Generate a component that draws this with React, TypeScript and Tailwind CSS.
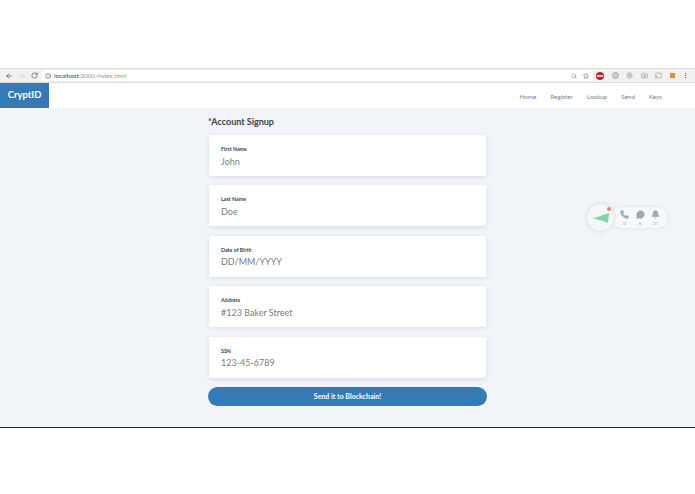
import { ArrowLeft, ArrowRight, RotateCw, Info, Search, Star, Phone, MessageCircle, Bell, Camera, Cast, MoreVertical, Settings } from "lucide-react"

const fields = [
  { label: "First Name", value: "John" },
  { label: "Last Name", value: "Doe" },
  { label: "Date of Birth", value: "DD/MM/YYYY" },
  { label: "Address", value: "#123 Baker Street" },
  { label: "SSN", value: "123-45-6789" },
]

const links = ["Home", "Register", "Lookup", "Send", "Keys"]

export default function App() {
  return (
    <div className="w-[695px] h-[494px] bg-white overflow-hidden font-['Lato','Open_Sans',sans-serif] flex flex-col">
      <div className="h-[68px] shrink-0 bg-white" />

      {/* Browser toolbar */}
      <div className="h-[15px] shrink-0 bg-[#f1f1f1] border-t border-[#dadada] border-b flex items-center pl-[5px]">
        <div className="flex items-center gap-[5px] text-[#5f6368]">
          <ArrowLeft className="w-[8px] h-[8px]" strokeWidth={2.5} />
          <ArrowRight className="w-[8px] h-[8px] text-[#d4d4d4]" strokeWidth={2.5} />
          <RotateCw className="w-[7px] h-[7px]" strokeWidth={2.5} />
        </div>
        <div className="ml-[4px] w-[551px] h-[11px] bg-white rounded-[2px] flex items-center pl-[3px] pr-[4px] text-[6.3px]">
          <Info className="w-[6px] h-[6px] text-[#444]" />
          <span className="ml-[3px] text-[#444]">localhost</span>
          <span className="text-[#999]">:3000/index.html</span>
          <Search className="ml-auto w-[6px] h-[6px] text-[#777]" />
          <Star className="ml-[6px] w-[6px] h-[6px] text-[#444]" />
        </div>
        <div className="ml-[3px] flex items-center gap-[7.5px] text-[#8a8a8a]">
          <div className="w-[8px] h-[8px] rounded-full bg-[#c5222a] flex items-center justify-center">
            <div className="w-[6px] h-[2px] bg-[#f3c9cb]" />
          </div>
          <div className="w-[7px] h-[7px] rounded-full border border-[#aaa] bg-[#ccc]" />
          <Settings className="w-[7px] h-[7px]" />
          <Camera className="w-[7px] h-[7px]" />
          <Cast className="w-[7px] h-[7px]" />
          <div className="w-[5px] h-[5px] bg-[#e58a2b]" />
          <MoreVertical className="w-[7px] h-[7px] text-[#555]" />
        </div>
      </div>

      {/* Nav */}
      <header className="h-[25px] shrink-0 bg-white flex items-stretch justify-between">
        <div className="w-[49px] bg-[#337ab7] text-white text-[9.5px] font-bold flex items-start justify-center pt-[7px] leading-none">
          CryptID
        </div>
        <nav className="flex items-center gap-[14px] pr-[33px] pt-[2px] text-[6.3px] text-[#7a848d]">
          {links.map((l) => (
            <a key={l} href="#">
              {l}
            </a>
          ))}
        </nav>
      </header>

      {/* Page */}
      <main className="relative flex-1 bg-[#f1f5f9] flex flex-col items-start pl-[208px] pt-[7px]">
        <h1 className="text-[9px] font-bold text-[#3c4248] leading-[13px]">*Account Signup</h1>
        <div className="mt-[7px] ml-[1px] flex flex-col gap-[9.4px] w-[277px]">
          {fields.map((f) => (
            <div
              key={f.label}
              className="h-[41px] bg-white rounded-[2px] shadow-[0_1px_4px_rgba(60,70,90,0.14)] pl-[12px] pt-[11px]"
            >
              <div className="text-[5.3px] font-bold text-[#3a4250] leading-[7px]">{f.label}</div>
              <div className="mt-[1.5px] text-[9px] text-[#7d7d7d] leading-[14px]">{f.value}</div>
            </div>
          ))}
        </div>
        <button className="mt-[9px] w-[279px] h-[19px] rounded-full bg-[#337ab7] text-white text-[7px] font-bold">
          Send it to Blockchain!
        </button>

        {/* Floating widget */}
        <div className="absolute left-[587px] top-[99px] flex items-center">
          <div className="w-[58px] h-[21px] ml-[23px] bg-[#f6f8fb] rounded-full shadow-[0_0_3px_rgba(60,70,90,0.15)] flex items-start gap-[6.5px] pl-[10px] pt-[3px] text-[#a0a9b3]">
            <div className="flex flex-col items-center w-[9px]">
              <Phone className="w-[9px] h-[9px]" fill="currentColor" />
              <span className="mt-[2px] text-[4.5px] leading-[5px]">0</span>
            </div>
            <div className="flex flex-col items-center w-[9px]">
              <MessageCircle className="w-[9px] h-[9px]" fill="currentColor" />
              <span className="mt-[2px] text-[4.5px] leading-[5px]">6</span>
            </div>
            <div className="flex flex-col items-center w-[9px]">
              <Bell className="w-[9px] h-[9px]" fill="currentColor" />
              <span className="mt-[2px] text-[4.5px] leading-[5px]">37</span>
            </div>
          </div>
          <div className="absolute left-0 top-[-3px] w-[27px] h-[27px] rounded-full bg-[#f4f6f8] shadow-[0_0_4px_rgba(60,70,90,0.2)] flex items-center justify-center">
            <svg viewBox="0 0 16 10" className="w-[16px] h-[10px]">
              <path d="M0 5.5 L16 0 L15 10 L9 7.5 Z" fill="#7fd6a0" />
            </svg>
            <div className="absolute right-[3px] top-[3px] w-[4px] h-[4px] rounded-full bg-[#ee7d7d]" />
          </div>
        </div>
      </main>

      <div className="h-px shrink-0 bg-[#222]" />
      <div className="h-[66px] shrink-0 bg-white" />
    </div>
  )
}
